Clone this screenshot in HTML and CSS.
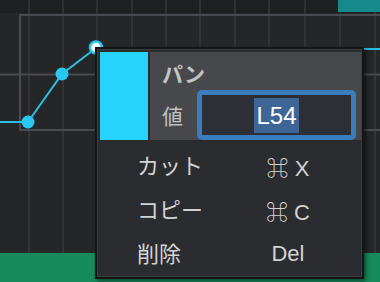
FILE: index.html
```html
<!DOCTYPE html>
<html lang="ja">
<head>
  <meta charset="UTF-8">
  <meta name="viewport" content="width=device-width, initial-scale=1.0">
  <title>パン</title>
  <link rel="stylesheet" href="styles.css">
</head>
<body>
  <div class="editor">
    <!-- automation lane -->
    <svg class="lane" width="380" height="253" viewBox="0 0 380 253">
      <rect x="0" y="0" width="380" height="13" fill="#1f2022"></rect>
      <rect x="338" y="0" width="42" height="12" fill="#16898b"></rect>
      <g stroke="#36383b" stroke-width="1.5">
        <line x1="29" y1="0" x2="29" y2="253"></line>
        <line x1="63" y1="0" x2="63" y2="253"></line>
        <line x1="97" y1="0" x2="97" y2="253"></line>
        <line x1="132" y1="0" x2="132" y2="253"></line>
        <line x1="166" y1="0" x2="166" y2="253"></line>
        <line x1="200" y1="0" x2="200" y2="253"></line>
        <line x1="235" y1="0" x2="235" y2="253"></line>
        <line x1="269" y1="0" x2="269" y2="253"></line>
        <line x1="305" y1="0" x2="305" y2="253"></line>
        <line x1="340" y1="12" x2="340" y2="253"></line>
        <line x1="375" y1="12" x2="375" y2="253"></line>
      </g>
      <g stroke="#474a4e" stroke-width="2" fill="none">
        <line x1="0" y1="74.5" x2="380" y2="74.5"></line>
        <path d="M380 15H20V130H380"></path>
      </g>
      <polyline points="0,122 28,122 62,74 96,48 380,49" fill="none" stroke="#2bbde2" stroke-width="2"></polyline>
      <circle cx="28" cy="122" r="6.5" fill="#28c8f0"></circle>
      <circle cx="62" cy="74" r="6.5" fill="#28c8f0"></circle>
      <circle cx="96" cy="47.5" r="6" fill="#ffffff" stroke="#28c8f0" stroke-width="2.5"></circle>
    </svg>
    <div class="track"></div>

    <!-- context menu -->
    <div class="popup">
      <div class="popup-head">
        <div class="swatch"></div>
        <div class="head-body">
          <div class="head-title">パン</div>
          <div class="value-row">
            <span class="value-label">値</span>
            <div class="value-input"><span class="selected">L54</span></div>
          </div>
        </div>
      </div>
      <div class="menu">
        <div class="menu-item"><span>カット</span><span class="shortcut">⌘ X</span></div>
        <div class="menu-item"><span>コピー</span><span class="shortcut">⌘ C</span></div>
        <div class="menu-item"><span>削除</span><span class="shortcut">Del</span></div>
      </div>
    </div>
  </div>
</body>
</html>
```

FILE: styles.css
```css
body {
  margin: 0;
  padding: 0;
  background-color: #252628;
  font-family: "Liberation Sans", "Noto Sans CJK JP", sans-serif;
  overflow: hidden;
}

.editor {
  position: relative;
  width: 380px;
  height: 282px;
}

.lane {
  display: block;
}

.track {
  height: 29px;
  background-color: #168b5d;
}

.popup {
  position: absolute;
  left: 95px;
  top: 47px;
  width: 261px;
  height: 222px;
  padding: 3px 1px 3px 3px;
  background-color: #2a2c2f;
  border: 2px solid #141517;
  box-shadow: inset 0 0 0 1px #3b3d40, 2px 2px 4px rgba(0, 0, 0, 0.5);
}

.popup-head {
  display: flex;
  height: 88px;
  gap: 2px;
}

.swatch {
  width: 48px;
  background-color: #26d4fb;
}

.head-body {
  flex: 1;
  background-color: #46484c;
  padding: 10px 0 0 12px;
}

.head-title {
  font-size: 21px;
  line-height: 26px;
  font-weight: bold;
  color: #c4c4c4;
}

.value-row {
  display: flex;
  align-items: center;
  margin-top: 2px;
}

.value-label {
  width: 35px;
  font-size: 21px;
  color: #c0c0c0;
}

.value-input {
  box-sizing: border-box;
  width: 159px;
  height: 50px;
  border: 5px solid #3c7dbd;
  border-radius: 5px;
  background-color: #2c2f36;
  display: flex;
  align-items: center;
  justify-content: center;
}

.selected {
  padding: 0 2px;
  font-size: 24px;
  line-height: 35px;
  color: #ffffff;
  background-color: #3d6596;
}

.menu {
  padding-top: 2px;
}

.menu-item {
  display: grid;
  grid-template-columns: 117px 1fr;
  align-items: center;
  height: 44px;
  font-size: 22px;
  color: #d2d2d2;
}

.menu-item > span:first-child {
  padding-left: 37px;
}

.shortcut {
  text-align: center;
  padding-right: 2px;
}

.shortcut:last-child {
  padding-top: 3px;
}
```
